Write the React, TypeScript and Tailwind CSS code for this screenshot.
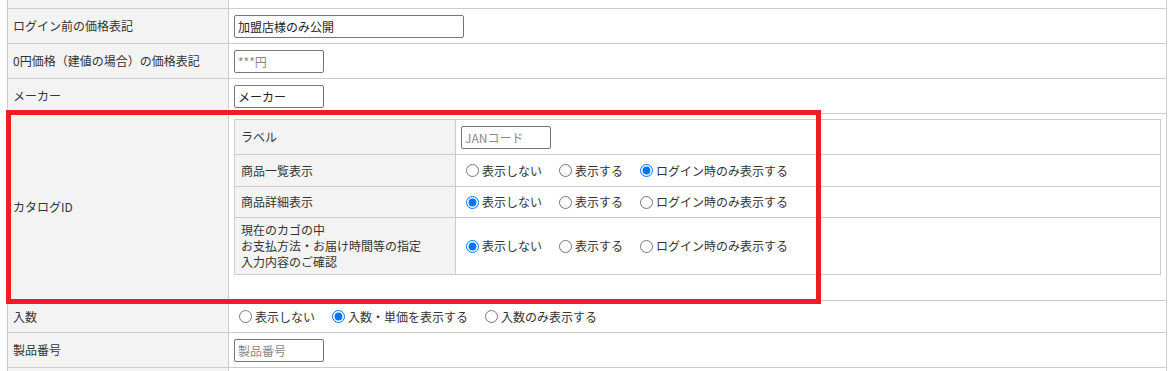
import React from "react";

type Opt = { label: string; checked?: boolean };

function Radios({ name, options }: { name: string; options: Opt[] }) {
  return (
    <div className="flex items-center">
      {options.map((o) => (
        <label key={o.label} className="mr-[12px] flex items-center">
          <input
            type="radio"
            name={name}
            defaultChecked={o.checked}
            className="mr-[3px] ml-[5px] h-[13px] w-[13px]"
          />
          <span>{o.label}</span>
        </label>
      ))}
    </div>
  );
}

function Row({
  label,
  h,
  children,
  top = false,
}: {
  label: React.ReactNode;
  h: string;
  children?: React.ReactNode;
  top?: boolean;
}) {
  return (
    <div className={`flex border-b border-[#ccc] ${h}`}>
      <div className="flex w-[221px] shrink-0 items-center border-r border-[#ccc] bg-[#f3f3f3] px-[5px]">
        {label}
      </div>
      <div
        className={`flex min-w-0 flex-1 px-[5px] ${top ? "items-start pt-[5px]" : "items-center"}`}
      >
        {children}
      </div>
    </div>
  );
}

function InnerRow({
  label,
  h,
  children,
}: {
  label: React.ReactNode;
  h: string;
  children?: React.ReactNode;
}) {
  return (
    <div className={`flex border-b border-[#ccc] ${h}`}>
      <div className="flex w-[221px] shrink-0 items-center border-r border-[#ccc] bg-[#f3f3f3] px-[6px] leading-4">
        {label}
      </div>
      <div className="flex flex-1 items-center px-[5px]">{children}</div>
    </div>
  );
}

const inputCls =
  "h-[23px] rounded-[2px] border border-[#767676] bg-white px-[3px] text-[12px] text-[#222] placeholder:text-[#888] outline-none";

const showOpts = (checked: number): Opt[] =>
  ["表示しない", "表示する", "ログイン時のみ表示する"].map((l, i) => ({
    label: l,
    checked: i === checked,
  }));

export default function App() {
  return (
    <div
      className="relative h-[371px] w-[1173px] overflow-hidden bg-white text-[12px] text-[#333]"
      style={{ fontFamily: '"Noto Sans CJK JP", "Noto Sans", sans-serif' }}
    >
      <div className="ml-[7px] w-[1160px] border-x border-[#ccc]">
        <Row label="" h="h-[9px]" />
        <Row label="ログイン前の価格表記" h="h-[35px]">
          <input className={`${inputCls} w-[230px]`} defaultValue="加盟店様のみ公開" />
        </Row>
        <Row label="0円価格（建値の場合）の価格表記" h="h-[35px]">
          <input className={`${inputCls} w-[90px]`} placeholder="***円" />
        </Row>
        <Row label="メーカー" h="h-[35px]">
          <input className={`${inputCls} w-[90px]`} defaultValue="メーカー" />
        </Row>
        <Row label="カタログID" h="h-[187px]" top>
          <div className="w-full border border-b-0 border-[#ccc]">
            <InnerRow label="ラベル" h="h-[35px]">
              <input className={`${inputCls} h-[23px] w-[90px]`} placeholder="JANコード" />
            </InnerRow>
            <InnerRow label="商品一覧表示" h="h-[32px]">
              <Radios name="list" options={showOpts(2)} />
            </InnerRow>
            <InnerRow label="商品詳細表示" h="h-[31px]">
              <Radios name="detail" options={showOpts(0)} />
            </InnerRow>
            <InnerRow
              label={
                <div>
                  現在のカゴの中
                  <br />
                  お支払方法・お届け時間等の指定
                  <br />
                  入力内容のご確認
                </div>
              }
              h="h-[57px]"
            >
              <Radios name="cart" options={showOpts(0)} />
            </InnerRow>
          </div>
        </Row>
        <Row label="入数" h="h-[32px]">
          <Radios
            name="irisu"
            options={[
              { label: "表示しない" },
              { label: "入数・単価を表示する", checked: true },
              { label: "入数のみ表示する" },
            ]}
          />
        </Row>
        <Row label="製品番号" h="h-[35px]">
          <input className={`${inputCls} w-[90px]`} placeholder="製品番号" />
        </Row>
        <Row label="" h="h-[35px]" />
      </div>

      {/* highlight */}
      <div className="pointer-events-none absolute top-[110px] left-[6px] h-[194px] w-[815px] border-[5px] border-[#ee1c24]" />
    </div>
  );
}
